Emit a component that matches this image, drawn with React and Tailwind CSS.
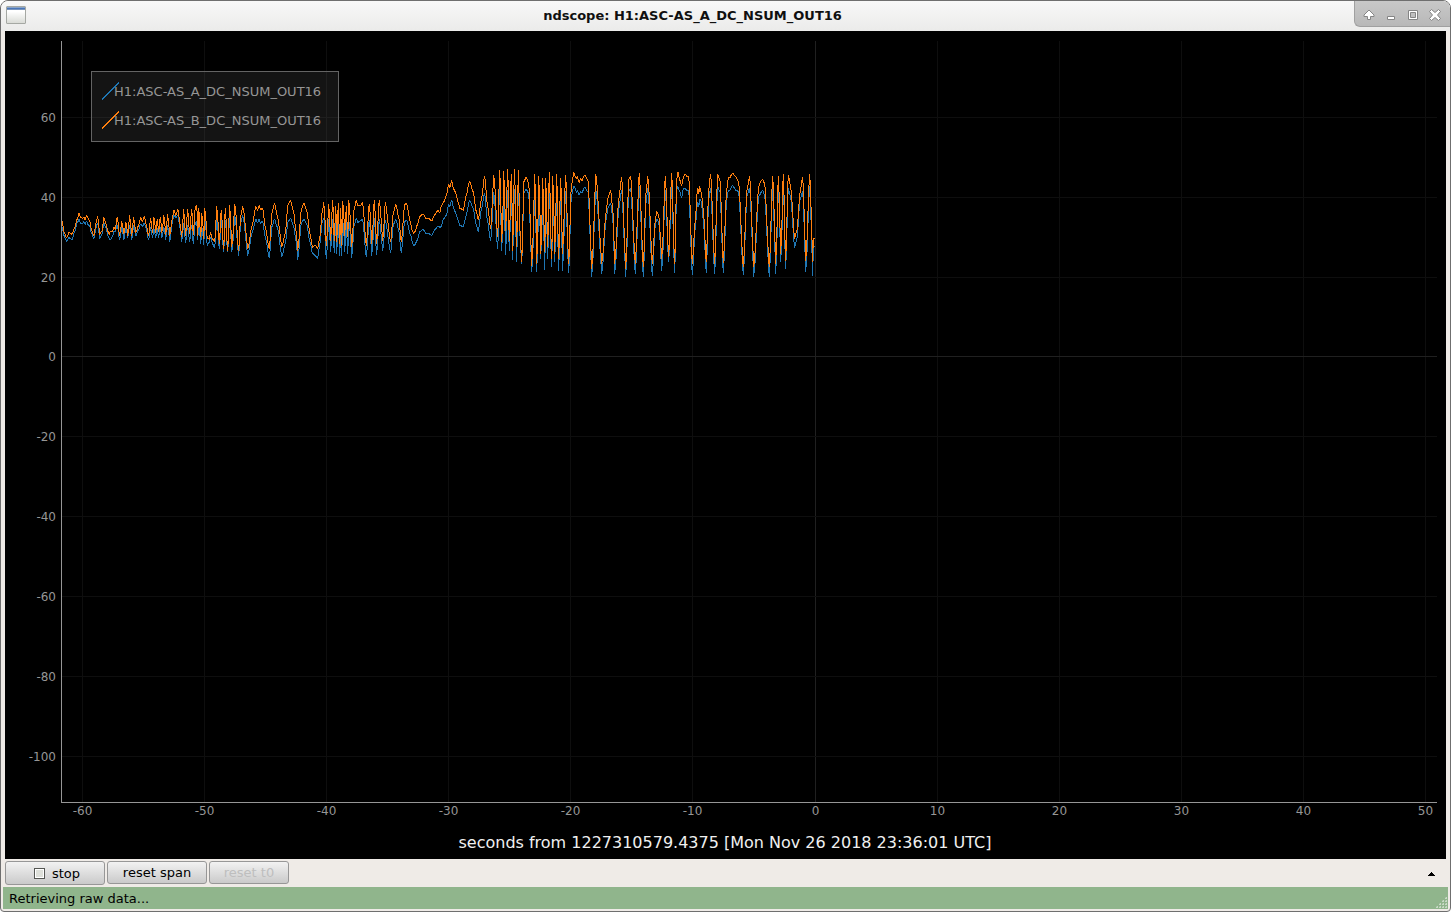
const X_TICKS = [-60, -50, -40, -30, -20, -10, 0, 10, 20, 30, 40, 50];
const Y_TICKS = [60, 40, 20, 0, -20, -40, -60, -80, -100];

// plot view box
const VIEW = { x: 62, y: 41, w: 1375, h: 761 };

const xAt = (seconds) => Math.round(814.55 + seconds * 12.21) + 0.5;
const yAt = (value) => Math.round(356.45 - value * 3.995) + 0.5;

// Each chunk: origin plus "x,channelB,channelA" turning points, in thirds of a unit
const CHUNKS = [
  {
    x: 55,
    y: 195,
    data:
      "20,75,95 26,110,120 34,128,138 42,112,128 50,118,134 58,100,112 66,72,82 72,55,74 76,66,84 82,70,86 86,66,80 90,74,88 94,62,78 98,68,88 104,80,94 108,102,112 116,122,130 122,85,100 127,65,84 134,118,130 140,108,118 146,68,84 152,85,98 158,108,122 162,118,130 166,108,134 172,110,124 176,98,110 180,102,108 186,68,90 193,122,134 200,80,96 206,116,134 212,82,98 218,120,126 223,62,90 230,122,134 235,66,90 242,112,122 250,92,104 256,68,88 262,80,94 267,64,84 272,84,96 280,122,134 286,70,98 292,112,128 296,66,100 302,112,128 306,72,100 310,110,128 315,66,98 320,112,128 326,62,98 332,118,132 337,58,90 344,122,138 350,75,88 356,45,60 362,60,68 368,42,60 374,85,96 380,125,140 385,42,85 391,120,142 397,44,90 403,115,140 409,42,90 414,118,145 419,45,90 424,30,80 428,120,134 431,40,80 436,125,145 440,55,95 446,130,148 449,40,70 456,130,150 462,132,142 466,112,126 472,132,146 478,140,156 485,35,70 492,145,160 498,45,75 505,160,170 510,40,75 517,165,170 523,32,70 530,155,170 539,28,62 550,165,180 556,65,85 563,35,62",
  },
  {
    x: 245,
    y: 190,
    data:
      "8,175,195 20,110,130 32,50,88 37,60,98 42,46,88 46,58,100 52,55,94 60,110,140 72,175,202 80,70,110 88,40,88 96,75,110 110,170,200 120,130,160 128,45,96 136,32,85 144,60,105 152,120,150 158,180,207 168,60,100 176,40,88 184,60,100 194,130,155 202,172,190 210,165,197 217,175,205 224,140,160 230,70,100 236,38,85 243,165,205 251,42,88 256,150,185 262,32,88 267,150,188 271,48,90 275,155,190 279,40,90 283,160,195 287,55,100 290,165,195 293,35,90 299,135,185 303,50,95 307,140,190 311,32,88 320,170,202 326,60,110 333,32,85 338,45,98 346,46,92 352,38,88 363,165,200 372,42,90 380,160,195 387,32,85 394,160,192 402,30,88 413,150,182 420,38,90 436,155,187 444,70,105 452,42,88 460,80,120 468,155,187 478,45,95 484,40,90 496,100,135 502,124,160 506,130,166 510,124,162 516,105,150 524,80,125 534,72,118 542,85,130 550,86,130 560,92,136 568,75,120 578,62,108 584,68,112",
  },
  {
    x: 435,
    y: 160,
    data:
      "18,140,198 26,125,175 34,105,165 40,72,132 44,82,138 49,62,120 54,84,140 60,95,155 70,130,184 74,145,195 84,150,200 92,110,170 103,63,120 114,95,145 122,150,190 129,178,215 138,120,150 148,48,100 156,130,180 166,205,240 176,45,98 187,230,265 193,30,85 200,245,270 206,35,90 211,210,282 217,28,90 222,240,270 228,42,90 233,270,298 237,28,88 245,260,303 249,32,85 254,210,225 259,305,310 266,65,100 273,52,88 280,68,100 290,315,335 299,42,100 305,310,335 311,48,100 317,280,295 323,55,95 328,275,328 332,55,95 337,260,295 342,38,90 349,295,320 353,50,90 359,280,305 364,42,90 370,295,330 376,55,100 382,280,330 391,45,95 400,310,338 408,80,110 416,38,78",
  },
  {
    x: 575,
    y: 160,
    data:
      "0,48,85 4,56,98 6,50,90 12,68,104 16,56,94 20,62,98 28,45,82 38,60,95 50,325,348 62,42,85 80,310,340 92,160,180 98,115,145 106,92,130 112,140,170 119,310,340 130,120,150 139,52,90 152,325,348 160,60,95 166,48,85 180,310,340 192,40,80 204,320,348 212,100,130 218,48,85 231,310,345 240,180,195 245,155,178 250,165,185 260,295,332 270,48,90 280,290,305 289,40,80 298,310,337 304,60,90 308,36,80 314,60,95 319,76,112 325,50,85 330,42,85 336,50,92 340,48,90 351,310,343 360,180,200 366,95,135 368,84,126 371,100,140 374,78,118",
  },
  {
    x: 695,
    y: 160,
    data:
      "16,90,118 18,98,126 24,150,180 33,305,337 40,90,120 46,42,85 58,310,340 67,42,80 74,62,95 84,308,338 94,90,120 99,55,92 104,52,90 112,40,76 122,50,90 130,65,95 144,320,343 155,90,110 163,50,85 176,320,348 190,80,110 198,62,98 202,58,90 208,70,105 222,320,348 232,48,85 242,310,340 249,50,85 257,280,305 264,42,75 271,300,325 279,45,85 286,80,110 298,235,262 305,210,235 314,100,120 322,52,95 332,300,335 343,42,78 353,305,345 354,236,260 357,236,260",
  },
];

const TURNS = CHUNKS.flatMap((chunk) =>
  chunk.data.split(" ").map((turn) => {
    const [x, b, a] = turn.split(",").map(Number);
    return { x: chunk.x * 3 + x, a: chunk.y + a / 3, b: chunk.y + b / 3 };
  })
);

// One bar per unit of width, covering the range the signal passes through there
const tracePath = (key) => {
  const columns = new Map();
  TURNS.slice(1).forEach((to, i) => {
    const from = TURNS[i];
    for (let x = from.x; x <= to.x; x++) {
      const t = (x - from.x) / (to.x - from.x);
      const ease = 0.5 * t + 0.25 * (1 - Math.cos(Math.PI * t));
      const y = Math.floor(from[key] + (to[key] - from[key]) * ease);
      const col = Math.floor(x / 3);
      const range = columns.get(col) || [y, y];
      columns.set(col, [Math.min(range[0], y), Math.max(range[1], y)]);
    }
  });

  let last = null;
  return [...columns]
    .map(([col, [min, max]]) => {
      let lo = min;
      let hi = max;
      if (last && lo > last[1] + 1) lo = last[1] + 1;
      if (last && hi < last[0] - 1) hi = last[0] - 1;
      last = [min, max];
      return `M${col} ${lo}h1V${hi + 1}h-1z`;
    })
    .join("");
};

const CHANNELS = [
  { name: "H1:ASC-AS_A_DC_NSUM_OUT16", color: "#1f77b4", key: "a" },
  { name: "H1:ASC-AS_B_DC_NSUM_OUT16", color: "#ff7f0e", key: "b" },
];

const left = (x) => `${((x - VIEW.x) / VIEW.w) * 100}%`;
const top = (y) => `${((y - VIEW.y) / VIEW.h) * 100}%`;

const Traces = () => (
  <svg
    className="block h-full w-full"
    viewBox={`${VIEW.x} ${VIEW.y} ${VIEW.w} ${VIEW.h}`}
    preserveAspectRatio="none"
    shapeRendering="crispEdges"
  >
    {X_TICKS.map((t) => (
      <path
        key={t}
        d={`M${xAt(t)} 41V802`}
        stroke={t === 0 ? "#202020" : "#0e0e0e"}
        vectorEffect="non-scaling-stroke"
      />
    ))}
    {Y_TICKS.map((t) => (
      <path
        key={t}
        d={`M62 ${yAt(t)}H1437`}
        stroke={t === 0 ? "#202020" : "#0e0e0e"}
        vectorEffect="non-scaling-stroke"
      />
    ))}
    {CHANNELS.map((c) => (
      <path key={c.key} d={tracePath(c.key)} fill={c.color} />
    ))}
  </svg>
);

const Legend = () => (
  <ul className="absolute top-[30px] left-[29px] flex h-[71px] w-[248px] flex-col justify-center border border-[#646464] bg-[#646464]/20 pl-[10px] text-[13px] text-[#969696]">
    {CHANNELS.map((c) => (
      <li key={c.name} className="flex h-[29px] items-center whitespace-nowrap">
        <svg
          className="mb-[2px] h-[18px] w-3 shrink-0 overflow-visible"
          viewBox="0 0 12 18"
          shapeRendering="crispEdges"
        >
          <path d="M0 17.5L17 0.5" stroke={c.color} />
        </svg>
        {c.name}
      </li>
    ))}
  </ul>
);

const Plot = () => (
  <main className="mx-1 flex min-h-0 flex-1 flex-col bg-black pt-[10px] pr-[9px] text-xs text-[#969696]">
    <div className="ml-14 min-h-0 flex-1 border-b border-l border-[#969696]">
      <div className="relative h-full">
        <Traces />
        {Y_TICKS.map((t) => (
          <span
            key={t}
            className="absolute right-full mr-[6px] -translate-y-1/2 leading-4"
            style={{ top: top(yAt(t)) }}
          >
            {t}
          </span>
        ))}
        {X_TICKS.map((t) => (
          <span
            key={t}
            className="absolute top-full mt-px -translate-x-1/2 leading-4"
            style={{ left: left(xAt(t)) }}
          >
            {t}
          </span>
        ))}
        <Legend />
      </div>
    </div>
    <p className="mt-7 mb-1 ml-2 text-center text-base leading-6 text-[#f0f0f0]">
      seconds from 1227310579.4375 [Mon Nov 26 2018 23:36:01 UTC]
    </p>
  </main>
);

const WINDOW_BUTTONS = [
  { label: "Shade", d: "M8 3L3 8V9.5H6.5V12.5H9.5V9.5H13V8Z" },
  { label: "Minimize", d: "M4.5 9.5H11.5V12.5H4.5Z" },
  {
    label: "Maximize",
    d: "M3.5 3.5H12.5V12.5H3.5ZM5.5 5.5V10.5H10.5V5.5Z",
  },
  {
    label: "Close",
    d: "M2.5 4.5L4.5 2.5L8 5.5L11.5 2.5L13.5 4.5L10.5 8L13.5 11.5L11.5 13.5L8 10.5L4.5 13.5L2.5 11.5L5.5 8Z",
  },
];

const TitleBar = () => (
  <header className="flex h-[30px] shrink-0 items-start rounded-t-md bg-linear-to-b from-[#f8f8f8] to-[#ebebea]">
    <div className="flex w-[30px] pt-[5px] pl-[5px]">
      <svg className="h-[18px] w-5" viewBox="0 0 20 18">
        <defs>
          <linearGradient id="pane" x2="0" y2="1">
            <stop offset="0.3" stopColor="#fff" />
            <stop offset="1" stopColor="#d8dad5" />
          </linearGradient>
        </defs>
        <rect x="0.5" y="0.5" width="19" height="17" rx="0.5" fill="url(#pane)" stroke="#a5a8a3" />
        <path d="M1 1.5H19" stroke="#8ba5c9" />
        <path d="M1 2.5H19" stroke="#4a76b8" />
        <path d="M1 3.5H19" stroke="#7793bd" />
      </svg>
    </div>
    <h1 className="flex-1 text-center text-[13px] leading-[30px] font-bold text-[#101010]">
      ndscope: H1:ASC-AS_A_DC_NSUM_OUT16
    </h1>
    <div className="flex h-[26px] w-24 items-center justify-end gap-[6px] rounded-tr-md rounded-bl-md border-b border-l border-[#a0a0a0] bg-linear-to-b from-[#c8c8c8] to-[#b8b8b8] pt-[2px] pr-[7px]">
      {WINDOW_BUTTONS.map((b) => (
        <button key={b.label} type="button" aria-label={b.label}>
          <svg className="block size-4" viewBox="0 0 16 16" fill="#fff" fillRule="evenodd">
            <path d={b.d} stroke="#858585" />
          </svg>
        </button>
      ))}
    </div>
  </header>
);

const BUTTON =
  "flex items-center justify-center rounded-[3px] border border-[#979797] bg-linear-to-b from-[#f2f2f2] to-[#cacaca]";

const Controls = () => (
  <div className="mx-1 flex h-7 shrink-0 items-start gap-[2px] pt-[2px] text-[13px]">
    <button type="button" className={`${BUTTON} h-6 w-[100px] gap-[7px] pt-px pl-1`}>
      <svg className="mb-px size-[11px]" viewBox="0 0 11 11">
        <rect x="0.5" y="0.5" width="10" height="10" fill="#fff" stroke="#555753" />
        <rect x="2" y="2" width="7" height="7" fill="#dee0da" />
      </svg>
      stop
    </button>
    <button type="button" className={`${BUTTON} h-[23px] w-[100px]`}>
      reset span
    </button>
    <button type="button" disabled className={`${BUTTON} h-[23px] w-20 text-[#bebebe]`}>
      reset t0
    </button>
    <button
      type="button"
      aria-label="Expand panel"
      className="mr-px ml-auto flex h-6 w-7 items-center justify-center pt-px"
    >
      <svg className="h-1 w-[7px]" viewBox="0 0 7 4" shapeRendering="crispEdges">
        <path d="M3 0H4V1H5V2H6V3H7V4H0V3H1V2H2V1H3Z" />
      </svg>
    </button>
  </div>
);

const GRIP_DOTS = [
  [9, 0],
  [6, 3], [9, 3],
  [3, 6], [6, 6], [9, 6],
  [0, 9], [3, 9], [6, 9], [9, 9],
];

const StatusBar = () => (
  <footer className="mx-[2px] mb-[2px] flex h-[22px] shrink-0 items-center justify-between bg-[#90b58c] pl-[6px] text-[13px]">
    <span className="pt-[2px]">Retrieving raw data...</span>
    <svg className="mr-px mb-px size-[11px] self-end" viewBox="0 0 11 11" shapeRendering="crispEdges">
      {GRIP_DOTS.map(([x, y]) => (
        <g key={`${x}-${y}`}>
          <rect x={x} y={y} width="2" height="2" fill="#c8dac5" />
          <rect x={x} y={y} width="1" height="1" fill="#a5bfa1" />
        </g>
      ))}
    </svg>
  </footer>
);

const App = () => (
  <div className="h-screen bg-white font-['DejaVu_Sans',sans-serif]">
    <div className="flex h-full flex-col overflow-hidden rounded-t-lg rounded-b-sm border border-[#6f6f6f] bg-[#efebe7] text-black">
      <TitleBar />
      <Plot />
      <Controls />
      <StatusBar />
    </div>
  </div>
);

export default App;
